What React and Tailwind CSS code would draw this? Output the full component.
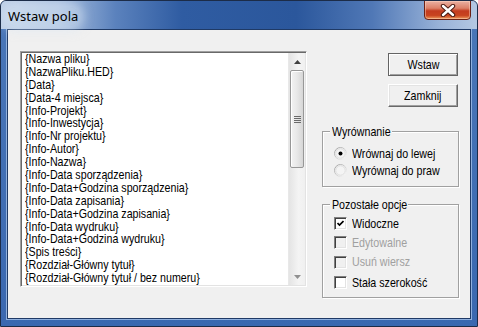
import React from 'react';

const fields = [
  '{Nazwa pliku}',
  '{NazwaPliku.HED}',
  '{Data}',
  '{Data-4 miejsca}',
  '{Info-Projekt}',
  '{Info-Inwestycja}',
  '{Info-Nr projektu}',
  '{Info-Autor}',
  '{Info-Nazwa}',
  '{Info-Data sporządzenia}',
  '{Info-Data+Godzina sporządzenia}',
  '{Info-Data zapisania}',
  '{Info-Data+Godzina zapisania}',
  '{Info-Data wydruku}',
  '{Info-Data+Godzina wydruku}',
  '{Spis treści}',
  '{Rozdział-Główny tytuł}',
  '{Rozdział-Główny tytuł / bez numeru}',
];

// Arial Narrow look: Liberation Sans squeezed horizontally
const sans = { fontFamily: '"Liberation Sans", Arial, sans-serif' };

function Narrow({ children, center }) {
  return (
    <span className={`inline-block whitespace-nowrap scale-x-[0.82] ${center ? 'origin-center' : 'origin-left'}`}>
      {children}
    </span>
  );
}

function CloseButton() {
  return (
    <div className="absolute right-[6px] top-[-1px] w-[47px] h-[20px] rounded-b-[4px] border border-[#6b2116] bg-[linear-gradient(180deg,#eab1a3_0%,#dc8068_40%,#c33b1f_55%,#c8431f_80%,#ee9a5c_100%)] shadow-[inset_0_0_0_1px_rgba(255,220,200,0.45)] flex items-center justify-center">
      <svg width="16" height="13" viewBox="0 0 16 13">
        <path d="M3 2 L13 11 M13 2 L3 11" stroke="#4a1a12" strokeWidth="4.4" strokeLinecap="round" />
        <path d="M3 2 L13 11 M13 2 L3 11" stroke="#ffffff" strokeWidth="2.4" strokeLinecap="round" />
      </svg>
    </div>
  );
}

function Scrollbar() {
  return (
    <div className="w-[17px] h-full flex flex-col bg-[linear-gradient(90deg,#e4e4e4,#f4f4f4_60%,#f0f0f0)] border-l border-[#e8e8e8]">
      <div className="h-[17px] flex items-center justify-center">
        <svg width="7" height="4" viewBox="0 0 7 4"><path d="M0 4 L3.5 0 L7 4 Z" fill="#404040" /></svg>
      </div>
      <div className="mx-[1px] h-[98px] rounded-[2px] border border-[#979797] bg-[linear-gradient(90deg,#f3f3f3,#e8e8e8_50%,#d6d6d6)] shadow-[inset_1px_1px_0_#fff] flex items-center justify-center">
        <div className="flex flex-col gap-[1px]">
          <div className="w-[7px] h-[1px] bg-[#6a6a6a]" />
          <div className="w-[7px] h-[1px] bg-[#6a6a6a]" />
          <div className="w-[7px] h-[1px] bg-[#6a6a6a]" />
          <div className="w-[7px] h-[1px] bg-[#6a6a6a]" />
        </div>
      </div>
      <div className="flex-1" />
      <div className="h-[17px] flex items-center justify-center">
        <svg width="7" height="4" viewBox="0 0 7 4"><path d="M0 0 L3.5 4 L7 0 Z" fill="#909090" /></svg>
      </div>
    </div>
  );
}

function Radio({ checked, label, id }) {
  return (
    <div className="flex items-center h-[17px]">
      <svg width="13" height="13" viewBox="0 0 13 13" className="ml-[11px] shrink-0">
        <defs>
          <linearGradient id={id} x1="0" y1="0" x2="1" y2="1">
            <stop offset="0" stopColor="#9a9a9a" />
            <stop offset="1" stopColor="#ffffff" />
          </linearGradient>
        </defs>
        <circle cx="6.5" cy="6.5" r="6" fill="#ffffff" stroke={`url(#${id})`} />
        <circle cx="6.5" cy="6.5" r="4.8" fill="#f4f4f4" stroke="#d4d4d4" strokeWidth="0.8" />
        {checked && <circle cx="6.5" cy="6.5" r="2" fill="#000000" />}
      </svg>
      <span className="ml-[5px] text-[13px] text-black">
        <Narrow>{label}</Narrow>
      </span>
    </div>
  );
}

function Check({ checked, disabled, label, h }) {
  return (
    <div className={`flex items-center ${h}`}>
      <div className={`ml-[11px] shrink-0 w-[13px] h-[13px] border border-t-[#808080] border-l-[#808080] border-r-[#ffffff] border-b-[#ffffff] shadow-[inset_1px_1px_0_#404040,inset_-1px_-1px_0_#e3e3e3] flex items-center justify-center ${disabled ? 'bg-[#f0f0f0]' : 'bg-white'}`}>
        {checked && (
          <svg width="7" height="7" viewBox="0 0 7 7">
            <path d="M0.5 3 L2.5 5 L6.5 1" stroke="#000" strokeWidth="1.7" fill="none" />
          </svg>
        )}
      </div>
      <span className={`ml-[5px] text-[13px] ${disabled ? 'text-[#a0a0a0]' : 'text-black'}`}>
        <Narrow>{label}</Narrow>
      </span>
    </div>
  );
}

function GroupBox({ title, titleW, className, children }) {
  return (
    <div className={`relative border border-[#a0a0a0] shadow-[inset_1px_1px_0_#fff,1px_1px_0_#fff] ${className}`}>
      <span className={`absolute left-[7px] top-[-8px] pl-[2px] bg-[#f0f0f0] text-[13px] leading-[15px] text-black ${titleW}`}>
        <Narrow>{title}</Narrow>
      </span>
      {children}
    </div>
  );
}

export default function App() {
  return (
    <div className="w-[478px] h-[327px] bg-white" style={sans}>
      <div className="w-[478px] h-[327px] flex flex-col rounded-t-[6px] border border-[#1c2c48] bg-[linear-gradient(180deg,#4a77b8,#3a68b0)] overflow-hidden">
        {/* Title bar */}
        <div className="relative h-[28px] flex items-center bg-[linear-gradient(90deg,#bfd0e7_0%,#a8bfdf_12%,#5b82bd_24%,#2f5ca2_38%,#2b579c_62%,#5078b6_78%,#98b2d8_92%,#b4c8e3_100%)]">
          <span className="ml-[6px] mt-[3px] px-[1px] text-[13px] text-black rounded-full shadow-[0_0_10px_5px_rgba(220,232,246,0.5)] bg-[rgba(220,232,246,0.4)]" style={{ fontFamily: '"Noto Sans", "Open Sans", sans-serif' }}>
            Wstaw pola
          </span>
          <CloseButton />
        </div>

        {/* Frame + client */}
        <div className="flex-1 px-[6px] pb-[7px]">
          <div className="w-full h-full border border-[#1f3a66] shadow-[0_0_0_1px_#8fb0de] bg-[#f0f0f0] flex pl-[12px]">
            {/* Listbox */}
            <div className="mt-[21px] w-[287px] h-[236px] flex border border-t-[#a0a0a0] border-l-[#a0a0a0] border-r-white border-b-white shadow-[inset_1px_1px_0_#696969,inset_-1px_-1px_0_#e3e3e3] p-[1px]">
              <div className="flex-1 bg-white pl-[3px] overflow-hidden">
                <div className="w-[320px] origin-left scale-x-[0.82]">
                  {fields.map((f) => (
                    <div key={f} className="text-[13px] leading-[12.9px] h-[12.9px] text-black whitespace-nowrap">{f}</div>
                  ))}
                </div>
              </div>
              <Scrollbar />
            </div>

            {/* Right column */}
            <div className="ml-[15px] w-[137px] flex flex-col">
              <button className="mt-[23px] ml-[66px] w-[70px] h-[23px] border border-[#646464] bg-[#f0f0f0] shadow-[inset_1px_1px_0_#fff,inset_-1px_-1px_0_#a0a0a0] text-[13px] text-black">
                <Narrow center>Wstaw</Narrow>
              </button>
              <button className="mt-[8px] ml-[66px] w-[70px] h-[23px] border border-t-[#fff] border-l-[#fff] border-r-[#696969] border-b-[#696969] bg-[#f0f0f0] shadow-[inset_-1px_-1px_0_#a0a0a0,inset_1px_1px_0_#e3e3e3] text-[13px] text-black">
                <Narrow center>Zamknij</Narrow>
              </button>

              <GroupBox title="Wyrównanie" titleW="w-[62px]" className="mt-[24px] h-[56px] pt-[13px]">
                <Radio checked id="r1" label="Wrównaj do lewej" />
                <Radio id="r2" label="Wyrównaj do praw" />
              </GroupBox>

              <GroupBox title="Pozostałe opcje" titleW="w-[78px]" className="mt-[17px] h-[94px] pt-[9px]">
                <Check checked label="Widoczne" h="h-[19px]" />
                <Check disabled label="Edytowalne" h="h-[19px]" />
                <Check disabled label="Usuń wiersz" h="h-[20px]" />
                <Check label="Stała szerokość" h="h-[21px]" />
              </GroupBox>
            </div>
          </div>
        </div>
      </div>
    </div>
  );
}
